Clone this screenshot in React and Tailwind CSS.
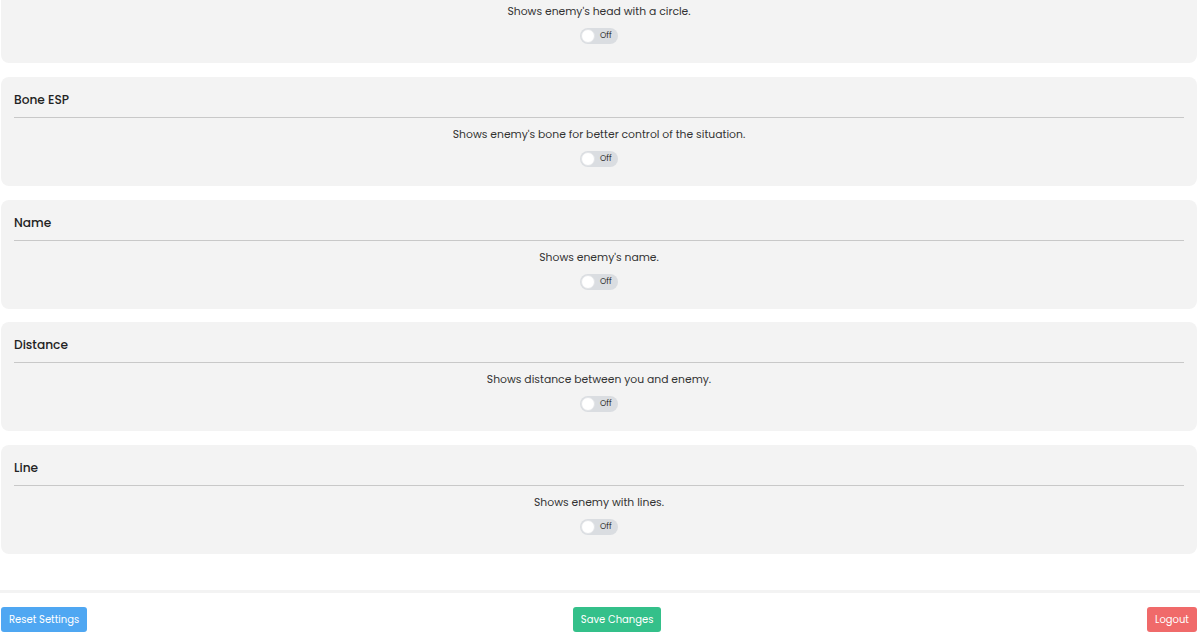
import { useState } from 'react'

const FONT = { fontFamily: 'Poppins, "Open Sans", "Noto Sans", sans-serif' }

const FEATURES = [
  { key: 'head', title: 'Head Circle', desc: "Shows enemy's head with a circle." },
  { key: 'bone', title: 'Bone ESP', desc: "Shows enemy's bone for better control of the situation." },
  { key: 'name', title: 'Name', desc: "Shows enemy's name." },
  { key: 'distance', title: 'Distance', desc: 'Shows distance between you and enemy.' },
  { key: 'line', title: 'Line', desc: 'Shows enemy with lines.' },
]

const Toggle = ({ on, onChange }) => (
  <button
    type="button"
    onClick={onChange}
    className={`relative flex items-center w-[38px] h-[16px] rounded-full ${on ? 'bg-[#34c08a]' : 'bg-[#dadde1]'}`}
  >
    <span
      className={`absolute top-[1px] w-[14px] h-[14px] rounded-full bg-white border border-[#e3e5e8] ${on ? 'left-[23px]' : 'left-[1px]'}`}
    />
    <span className={`text-[8px] leading-none text-[#333] ${on ? 'ml-[6px]' : 'ml-[20px]'}`}>
      {on ? 'On' : 'Off'}
    </span>
  </button>
)

export default function App() {
  const [state, setState] = useState({})

  return (
    <div style={FONT} className="w-[1200px] h-[642px] flex flex-col bg-white overflow-hidden">
      {/* ─── Feature list (scrolled) ─── */}
      <div className="flex-1 overflow-hidden px-[1px]">
        <div className="flex flex-col gap-[13.75px] w-[1196px] -mt-[46px]">
          {FEATURES.map((f) => (
            <div key={f.key} className="h-[109px] rounded-[8px] bg-[#f3f3f3] px-[13px] pt-[14px]">
              <h4 className="text-[12.2px] font-medium text-[#222] leading-[18px] pb-[8px] border-b-[1.5px] border-[#c8c8c8]">
                {f.title}
              </h4>
              <div className="flex flex-col items-center">
                <p className="mt-[9px] text-[10.8px] leading-[16px] text-[#333]">{f.desc}</p>
                <div className="mt-[8px]">
                  <Toggle
                    on={!!state[f.key]}
                    onChange={() => setState({ ...state, [f.key]: !state[f.key] })}
                  />
                </div>
              </div>
            </div>
          ))}
        </div>
      </div>

      {/* ─── Footer actions ─── */}
      <div className="h-[52px] border-t-[3px] border-[#f3f3f3] flex items-start justify-between pl-[1px] pr-[3px] pt-[14px]">
        <button className="h-[25px] px-[8px] rounded-[3px] bg-[#4fa7f2] text-white text-[10px]">
          Reset Settings
        </button>
        <button className="h-[25px] px-[8px] rounded-[3px] bg-[#34c08a] text-white text-[10px]">
          Save Changes
        </button>
        <button className="h-[25px] px-[8px] rounded-[3px] bg-[#f06a6a] text-white text-[10px]">
          Logout
        </button>
      </div>
    </div>
  )
}
